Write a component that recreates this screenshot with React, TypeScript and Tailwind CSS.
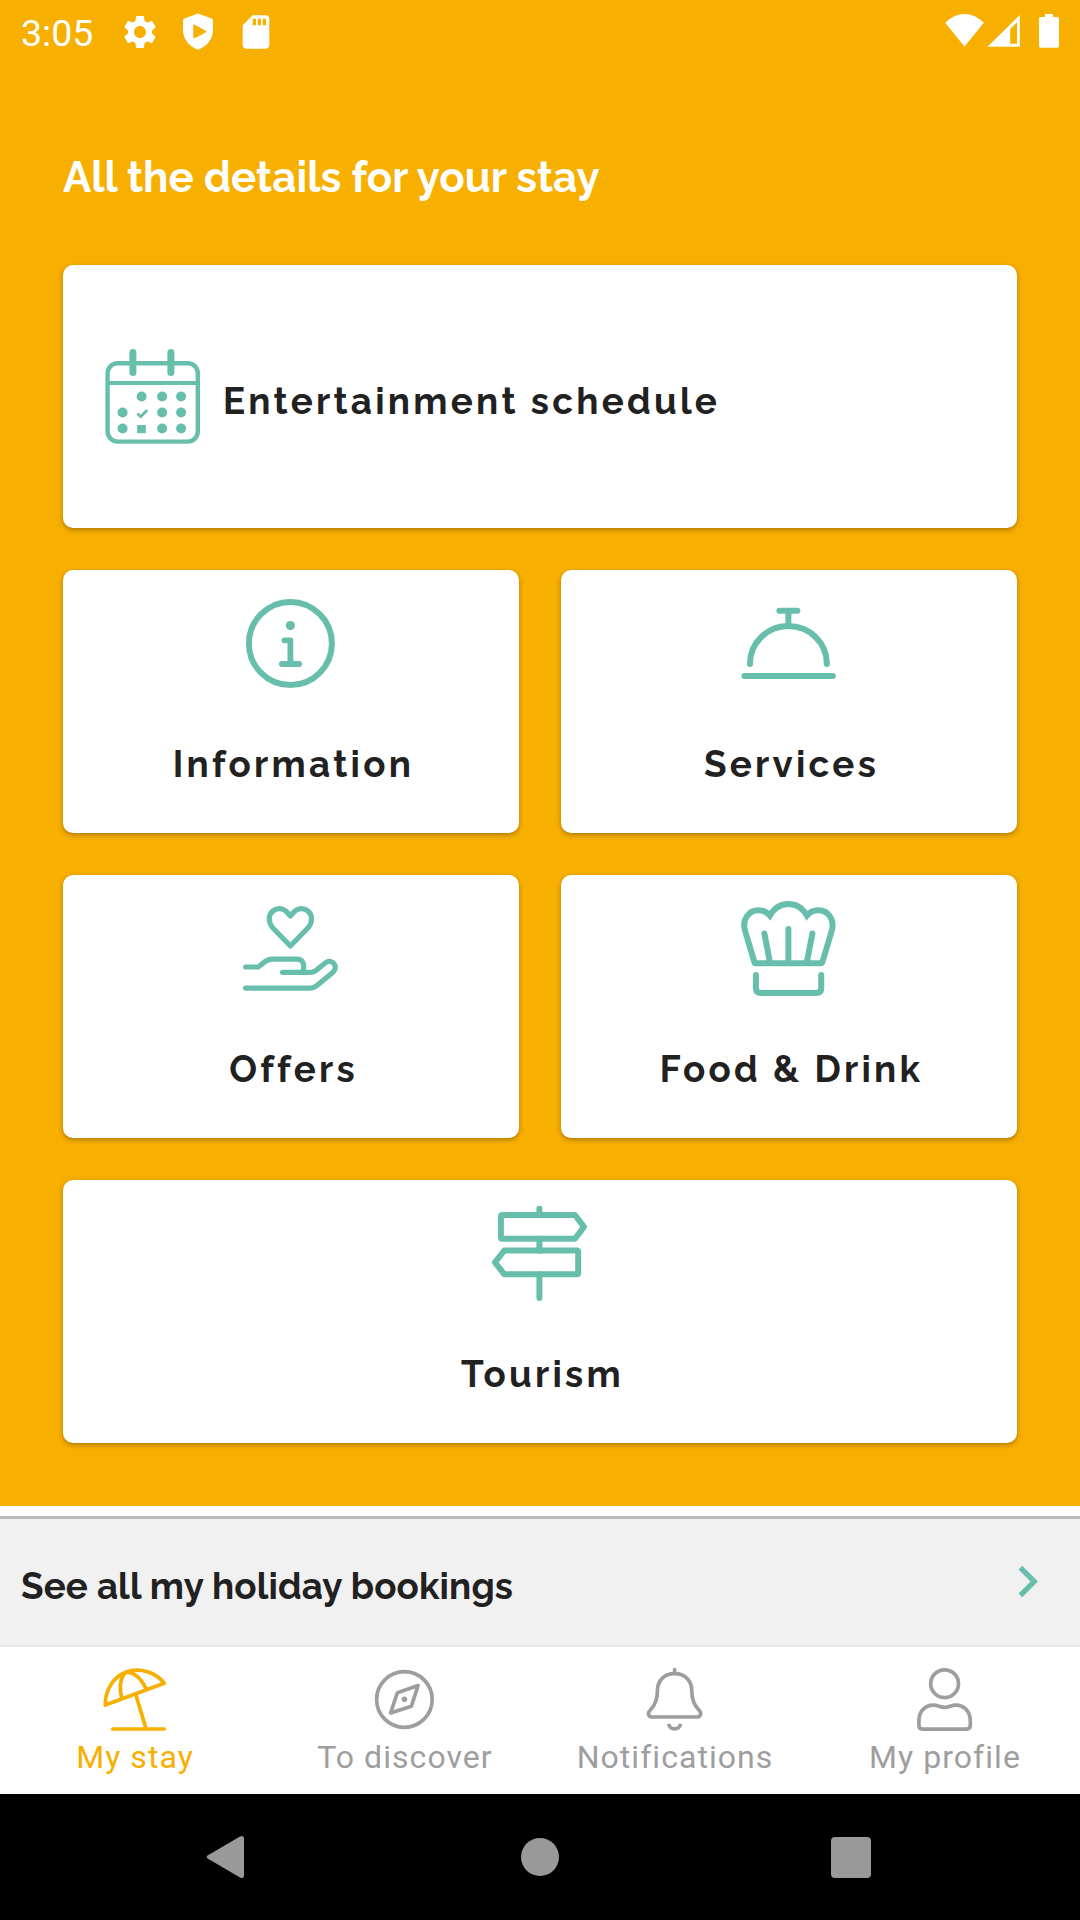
import React from "react";
import { MdSettings, MdSdCard } from "react-icons/md";

const stroke = {
  fill: "none",
  stroke: "currentColor",
  strokeLinecap: "round" as const,
  strokeLinejoin: "round" as const,
};

function CardIcon({ children, width = 6 }: { children: React.ReactNode; width?: number }) {
  return (
    <svg viewBox="-0.4 0 95 95" className="mr-px h-[95px] w-[95px] shrink-0 text-[#68beac]" {...stroke} strokeWidth={width}>
      {children}
    </svg>
  );
}

function TabIcon({ children }: { children: React.ReactNode }) {
  return (
    <svg viewBox="-0.4 0 63 63" className="mr-px h-[63px] w-[63px] shrink-0 overflow-visible" {...stroke} strokeWidth={3.7}>
      {children}
    </svg>
  );
}

const DOTS = [
  [36.5, 47.5], [57, 47.5], [76, 47.5],
  [17.5, 63.5], [57, 63.5], [76, 63.5],
  [17.5, 79.5], [57, 79.5], [76, 79.5],
];

function CalendarIcon() {
  return (
    <CardIcon width={4.4}>
      <rect x="2.2" y="14.2" width="90.2" height="78.4" rx="10" />
      <path d="M2.4 34H92.4" strokeWidth="4" strokeLinecap="butt" />
      <path d="M27.5 3.5V23.5M65.5 3.5V23.5" strokeWidth="7" />
      {DOTS.map(([x, y]) => (
        <circle key={`${x}-${y}`} cx={x - 0.3} cy={y} r="5" fill="currentColor" stroke="none" />
      ))}
      <path d="M32 64.5L35.3 67.7L41.8 61" strokeWidth="2.8" strokeLinecap="butt" />
      <rect x="31.8" y="76" width="8.6" height="8.2" fill="currentColor" stroke="none" />
    </CardIcon>
  );
}

function InfoIcon() {
  return (
    <CardIcon>
      <circle cx="47" cy="47.5" r="41.5" />
      <circle cx="47" cy="29.6" r="4.6" fill="currentColor" stroke="none" />
      <path d="M41 44.3H47V68M38.5 68H55.7" strokeWidth="5.8" />
    </CardIcon>
  );
}

function ServicesIcon() {
  return (
    <CardIcon>
      <path d="M3 80H91.5M8.6 68V67.5A38.4 37.5 0 0 1 85.4 67.5V68M47 30V14.8M38 14.8H56" />
    </CardIcon>
  );
}

function OffersIcon() {
  return (
    <CardIcon width={5.2}>
      <path d="M47 45L29.3 26.8C24.4 21.4 25 13.6 29.6 9.9C34.8 5.8 40.8 7.4 44.3 12L47 15L49.7 12C53.2 7.4 59.2 5.8 64.4 9.9C69 13.6 69.6 21.4 64.7 26.8Z" />
      <path d="M2.2 66H14.8L20.4 61.6Q24.6 58.1 29 58.1H53.5C59.5 58.1 61.5 63 59.6 71.2" />
      <path d="M39.2 71.3H67.5Q70.4 71.3 72.5 69.6L81.8 62C85.5 59.2 89.2 60.6 90.9 63.2C92.6 66 91.9 69.3 89.3 71.5L73.8 84.2Q70.8 87.1 67 87.1H2.2" />
    </CardIcon>
  );
}

function FoodIcon() {
  return (
    <CardIcon>
      <path d="M14.5 62.3Q13.4 62.3 13 61L3.7 30C0.2 18.5 7.2 9.3 17.2 9.3C21.8 9.3 25.5 11 28.5 14.6C33 6.8 39.3 3 47 3C54.7 3 61 6.8 65.5 14.6C68.5 11 72.2 9.3 76.8 9.3C86.8 9.3 93.8 18.5 90.3 30L81 61Q80.6 62.3 79.5 62.3Z" strokeLinejoin="miter" />
      <path d="M23 32.5L28.5 61M47 28V61M71 32.5L65.5 61" />
      <path d="M14.5 74V87Q14.5 92 19.5 92H74.8Q79.8 92 79.8 87V74" />
    </CardIcon>
  );
}

function TourismIcon() {
  return (
    <CardIcon>
      <path d="M47 2.6V9M47 32.7V44.7M47 68.3V92" />
      <path d="M8.5 10.5Q8.5 9 10 9H82.5L91.6 20.9L82.5 32.8H10Q8.5 32.8 8.5 31.3Z" />
      <path d="M85.8 46Q85.8 44.5 84.3 44.5H11.9L2.6 56.4L11.9 68.3H84.3Q85.8 68.3 85.8 66.8Z" />
    </CardIcon>
  );
}

const cardBase =
  "flex h-[263px] rounded-[10px] bg-white shadow-[0_2px_5px_rgba(90,60,0,0.45)]";
const cardLabel = "font-[Raleway,Lato,sans-serif] text-[36.75px] leading-[42px] font-bold tracking-[3.26px] text-[#212121]";

function Card({ icon, label, className = "" }: { icon: React.ReactNode; label: string; className?: string }) {
  return (
    <div className={`${cardBase} flex-col items-center pt-[26px] ${className}`}>
      {icon}
      <span className={`${cardLabel} mt-[52px] pl-[5px]`}>{label}</span>
    </div>
  );
}

function Tab({ icon, label, active = false }: { icon: React.ReactNode; label: string; active?: boolean }) {
  return (
    <div className={`flex flex-col items-center pt-[21px] ${active ? "text-[#f7af00]" : "text-[#9e9e9e]"}`}>
      {icon}
      <span className="mt-[8px] font-[Roboto,sans-serif] text-[32px] leading-[37px] tracking-[1.05px]">{label}</span>
    </div>
  );
}

function StatusBar() {
  return (
    <div className="flex h-[63px] justify-between text-white">
      <div className="flex">
        <span className="ml-[21px] mt-[12px] w-[99px] font-[Roboto,sans-serif] text-[37.5px] leading-[43px]">3:05</span>
        <MdSettings className="mt-[12px] h-10 w-10" />
        <svg viewBox="0 0 30 37" className="ml-[23px] mt-[13px] h-[37px] w-[30px]">
          <path
            fill="currentColor"
            fillRule="evenodd"
            d="M15 .5L28.5 5.4Q30 6 30 7.5V17C30 26 24 33.5 15 36.8C6 33.5 0 26 0 17V7.5Q0 6 1.5 5.4ZM10.3 12.4V24.6Q10.3 26.2 11.6 25.3L22.6 19.4Q23.7 18.5 22.6 17.6L11.6 11.7Q10.3 10.9 10.3 12.4Z"
          />
        </svg>
        <MdSdCard className="ml-[23px] mt-[12px] h-10 w-10" />
      </div>
      <svg viewBox="0 0 116 35" className="mr-[20px] mt-[13px] h-[35px] w-[116px]" fill="currentColor">
        <path d="M1.2 9.8Q10 1 20.5 1T39.8 9.8L20.5 33.5Z" />
        <path fillRule="evenodd" d="M43.5 33.8L75.8 2V33.8ZM66.2 16V30.8H73V9.3Z" />
        <path d="M101 1H109V4H113.5Q115 4 115 5.5V33Q115 34.8 113.3 34.8H96.7Q95 34.8 95 33V5.5Q95 4 96.5 4H101Z" />
      </svg>
    </div>
  );
}

export default function App() {
  return (
    <div className="flex h-[1920px] w-[1080px] flex-col overflow-hidden bg-white">
      <div className="h-[1506px] shrink-0 bg-[#f7af00]">
        <StatusBar />
        <h1 className="mt-[90px] px-[63px] font-[Raleway,Lato,sans-serif] text-[42px] leading-[50px] font-bold tracking-[0.06px] text-white">
          All the details for your stay
        </h1>
        <div className="mt-[62px] grid grid-cols-2 gap-[42px] px-[63px]">
          <div className={`${cardBase} col-span-2 items-start pt-[84px] pl-[42px]`}>
            <CalendarIcon />
            <span className={`${cardLabel} mt-[31px] ml-[22px]`}>Entertainment schedule</span>
          </div>
          <Card icon={<InfoIcon />} label="Information" />
          <Card icon={<ServicesIcon />} label="Services" />
          <Card icon={<OffersIcon />} label="Offers" />
          <Card icon={<FoodIcon />} label="Food &amp; Drink" />
          <Card icon={<TourismIcon />} label="Tourism" className="col-span-2" />
        </div>
      </div>

      <div className="mt-[10px] flex h-[131px] shrink-0 items-start justify-between border-t-[3px] border-[#bababa] bg-[#f1f1f1] px-[21px] shadow-[inset_0_-5px_3px_-3px_rgba(0,0,0,0.05)]">
        <span className="mt-[46px] font-[Raleway,Lato,sans-serif] text-[36.75px] leading-[42px] font-bold tracking-[0.13px] text-[#212121]">
          See all my holiday bookings
        </span>
        <svg viewBox="0 0 24 24" className="mt-[31px] h-[63px] w-[63px] fill-[#68beac]">
          <path d="M10 6L8.59 7.41 13.17 12l-4.58 4.59L10 18l6-6z" />
        </svg>
      </div>

      <div className="grid h-[147px] shrink-0 grid-cols-4 bg-white">
        <Tab
          active
          label="My stay"
          icon={
            <TabIcon>
              <path d="M1.9 37C1.5 21.5 10.5 8.5 22.5 4.2C36.5 -0.8 52 4 60.8 15.2Z" />
              <path d="M18.4 29.8C15.6 19 17.2 9.5 22.5 4.2C30 4.2 37.5 10 42.6 20.8M32.3 26.5L42.5 60M9.3 61H60.8" />
            </TabIcon>
          }
        />
        <Tab
          label="To discover"
          icon={
            <TabIcon>
              <circle cx="31" cy="31.5" r="27.8" />
              <path d="M44.6 17.6L24 24.7L17.2 45L38 38.2Z" />
              <circle cx="31" cy="31.3" r="2.8" fill="currentColor" stroke="none" />
            </TabIcon>
          }
        />
        <Tab
          label="Notifications"
          icon={
            <TabIcon>
              <path d="M31.2 1.7V5.7C21 5.7 14 12.5 14 23C14 32 12 37 6.9 42C3.5 45.5 5.3 49 9 49H53.4C57 49 58.9 45.5 55.5 42C50.4 37 48.4 32 48.4 23C48.4 12.5 41.4 5.7 31.2 5.7" />
              <path d="M25.2 55.8C26.8 62.6 35.6 62.6 37.2 55.8" strokeLinecap="butt" />
            </TabIcon>
          }
        />
        <Tab
          label="My profile"
          icon={
            <TabIcon>
              <circle cx="31.2" cy="15.7" r="13.9" />
              <path d="M9.3 61.1Q5.5 61.1 5.5 57.3V53C5.5 43.5 11.5 37.1 20 37.1C25 37.1 26.5 39.3 31.2 39.3C35.9 39.3 37.4 37.1 42.4 37.1C50.9 37.1 56.9 43.5 56.9 53V57.3Q56.9 61.1 53.1 61.1Z" />
            </TabIcon>
          }
        />
      </div>

      <div className="flex h-[126px] shrink-0 items-center justify-between bg-black pr-[209px] pl-[206px]">
        <svg viewBox="0 0 39 44" className="h-[44px] w-[39px] fill-[#999999]">
          <path d="M2 20.2L34 1.6Q38 -.2 38 3.6V40.4Q38 44.2 34 42.4L2 23.8Q-.6 22 2 20.2Z" />
        </svg>
        <div className="mr-[-4px] h-[38px] w-[38px] rounded-full bg-[#999999]" />
        <div className="h-[41px] w-[40px] rounded bg-[#999999]" />
      </div>
    </div>
  );
}
